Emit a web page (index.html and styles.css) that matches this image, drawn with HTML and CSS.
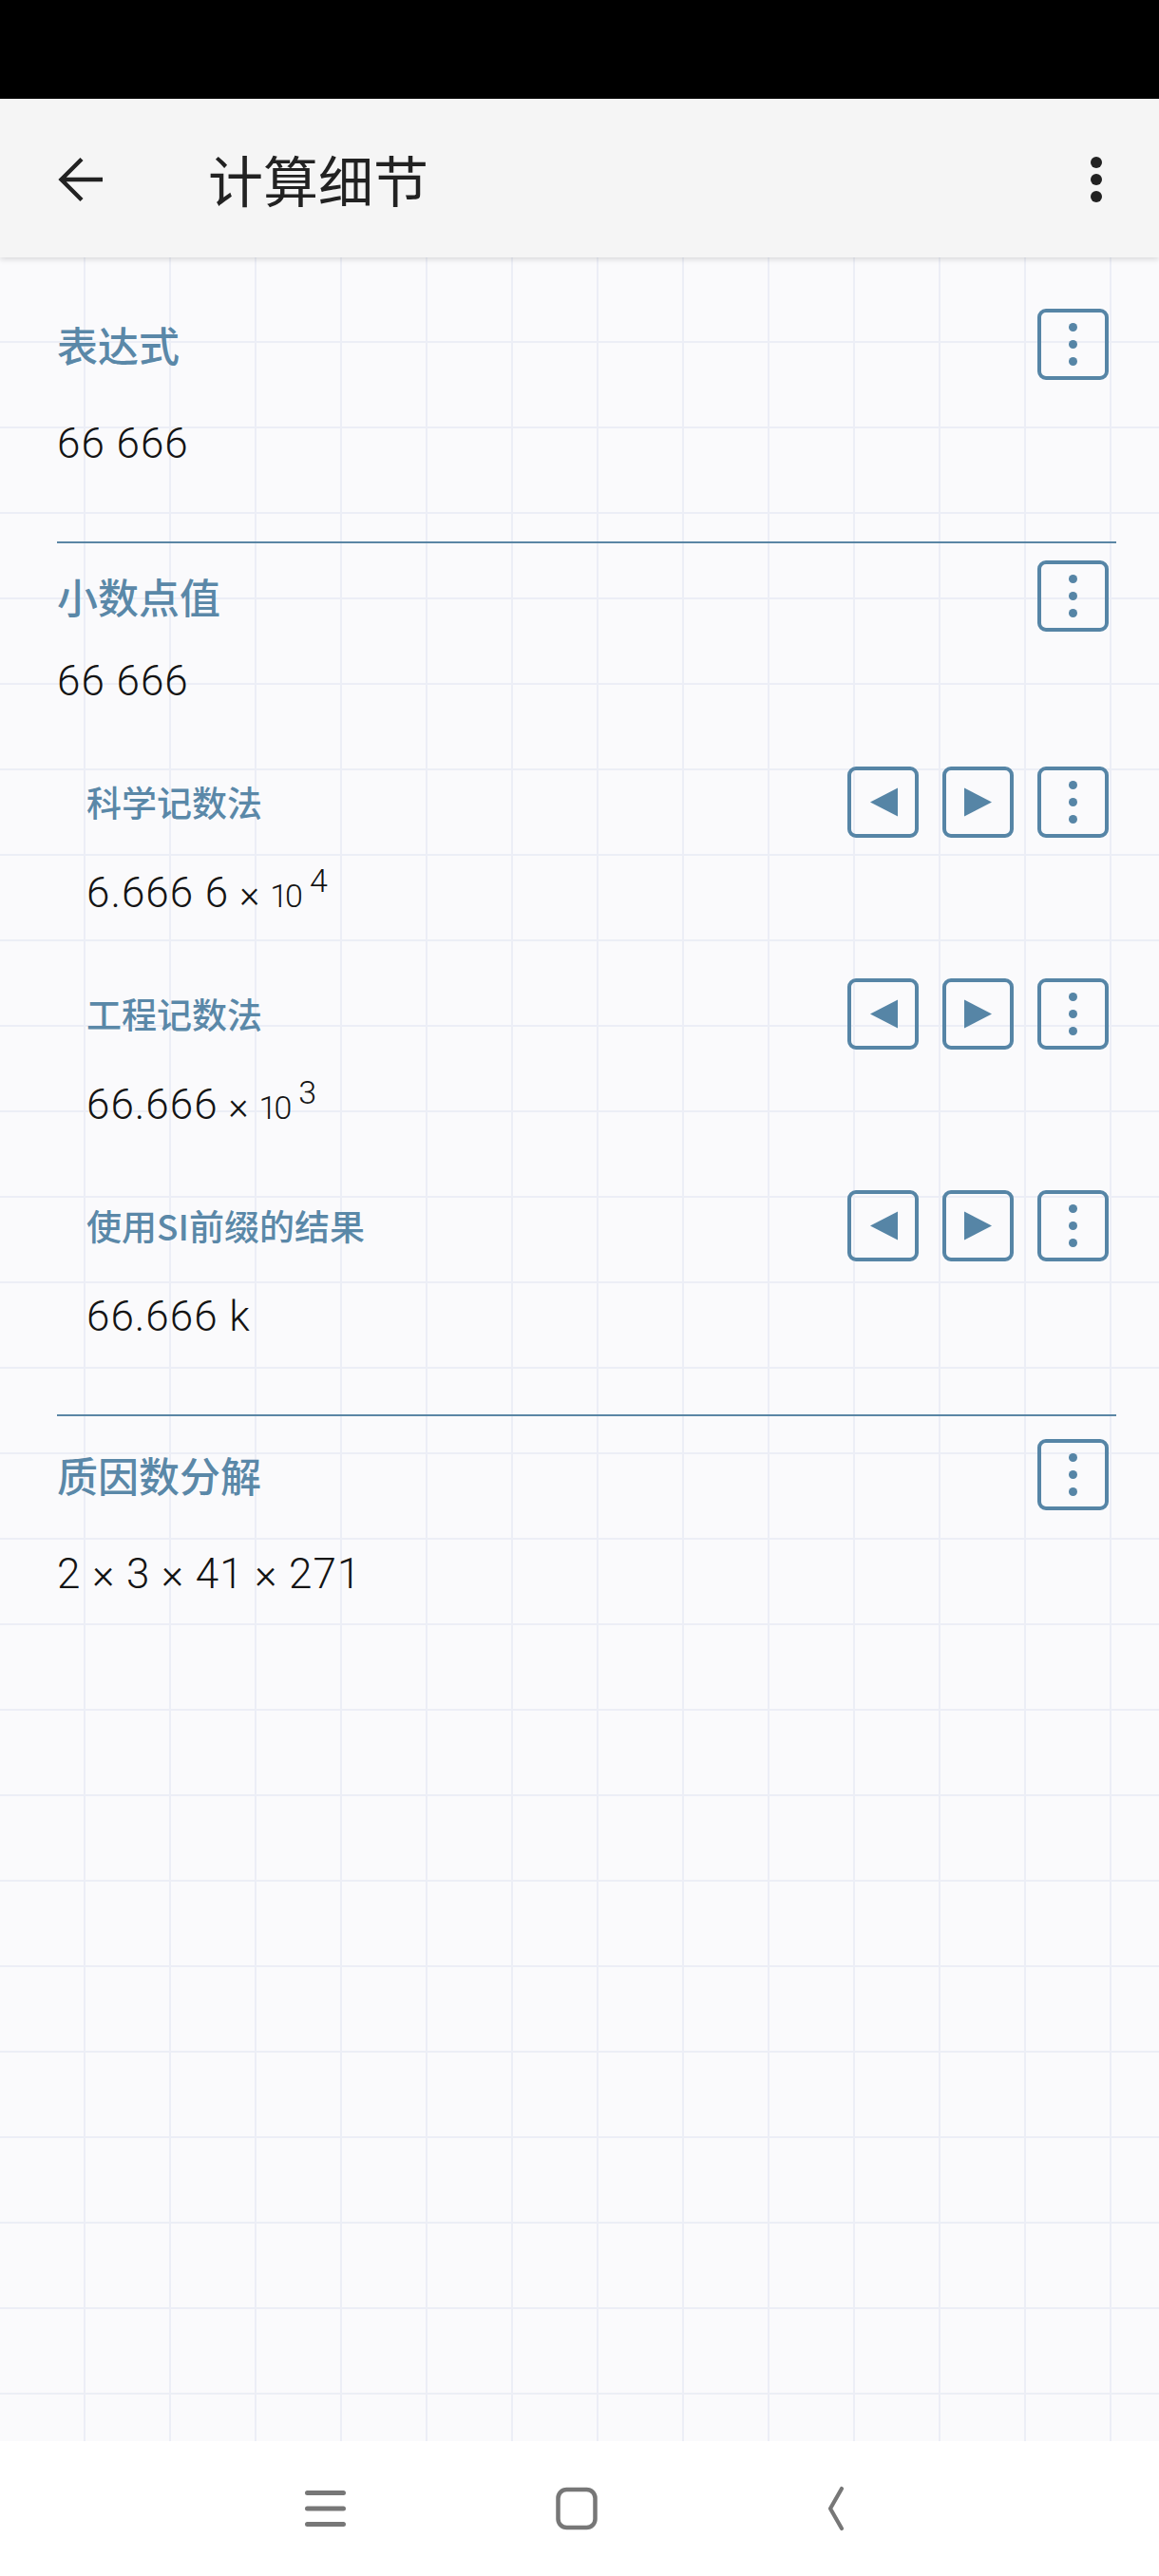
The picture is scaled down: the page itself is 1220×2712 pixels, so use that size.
FILE: index.html
```html
<!DOCTYPE html>
<html>

<head>
    <title>计算细节</title>
    <link rel="stylesheet" href="styles.css">
</head>

<body>
    <div class="status-bar"></div>

    <header class="app-bar">
        <svg class="back-icon" width="48" height="48" viewBox="0 0 48 48">
            <path d="M47 24H4 M25 2.5L3.5 24L25 45.5" fill="none" stroke="#222" stroke-width="4.4" />
        </svg>
        <h1 class="title">计算细节</h1>
        <svg class="overflow-icon" width="12" height="48" viewBox="0 0 12 48">
            <circle cx="6" cy="6" r="6" fill="#222" />
            <circle cx="6" cy="24" r="6" fill="#222" />
            <circle cx="6" cy="42" r="6" fill="#222" />
        </svg>
    </header>

    <main class="content">
        <section class="group group-expr">
            <div class="row-head">
                <h2 class="label">表达式</h2>
                <div class="actions">
                    <button class="btn" type="button">
                        <svg viewBox="0 0 67 67"><circle cx="33.5" cy="15.5" r="4.5" /><circle cx="33.5" cy="33.5" r="4.5" /><circle cx="33.5" cy="51.5" r="4.5" /></svg>
                    </button>
                </div>
            </div>
            <div class="value">66 666</div>
        </section>

        <hr class="divider">

        <section class="group group-decimal">
            <div class="row-head">
                <h2 class="label">小数点值</h2>
                <div class="actions">
                    <button class="btn" type="button">
                        <svg viewBox="0 0 67 67"><circle cx="33.5" cy="15.5" r="4.5" /><circle cx="33.5" cy="33.5" r="4.5" /><circle cx="33.5" cy="51.5" r="4.5" /></svg>
                    </button>
                </div>
            </div>
            <div class="value">66 666</div>

            <div class="sub">
                <div class="row-head">
                    <h3 class="label label-sub">科学记数法</h3>
                    <div class="actions">
                        <button class="btn" type="button">
                            <svg viewBox="0 0 67 67"><path d="M20 33.5L49 18.5V48.5Z" /></svg>
                        </button>
                        <button class="btn" type="button">
                            <svg viewBox="0 0 67 67"><path d="M19 18.5V48.5L48 33.5Z" /></svg>
                        </button>
                        <button class="btn" type="button">
                            <svg viewBox="0 0 67 67"><circle cx="33.5" cy="15.5" r="4.5" /><circle cx="33.5" cy="33.5" r="4.5" /><circle cx="33.5" cy="51.5" r="4.5" /></svg>
                        </button>
                    </div>
                </div>
                <div class="value">6.666 6<span class="times">×</span><span class="ten">10</span><span class="pow">4</span></div>
            </div>

            <div class="sub">
                <div class="row-head">
                    <h3 class="label label-sub">工程记数法</h3>
                    <div class="actions">
                        <button class="btn" type="button">
                            <svg viewBox="0 0 67 67"><path d="M20 33.5L49 18.5V48.5Z" /></svg>
                        </button>
                        <button class="btn" type="button">
                            <svg viewBox="0 0 67 67"><path d="M19 18.5V48.5L48 33.5Z" /></svg>
                        </button>
                        <button class="btn" type="button">
                            <svg viewBox="0 0 67 67"><circle cx="33.5" cy="15.5" r="4.5" /><circle cx="33.5" cy="33.5" r="4.5" /><circle cx="33.5" cy="51.5" r="4.5" /></svg>
                        </button>
                    </div>
                </div>
                <div class="value">66.666<span class="times">×</span><span class="ten">10</span><span class="pow">3</span></div>
            </div>

            <div class="sub">
                <div class="row-head">
                    <h3 class="label label-sub">使用SI前缀的结果</h3>
                    <div class="actions">
                        <button class="btn" type="button">
                            <svg viewBox="0 0 67 67"><path d="M20 33.5L49 18.5V48.5Z" /></svg>
                        </button>
                        <button class="btn" type="button">
                            <svg viewBox="0 0 67 67"><path d="M19 18.5V48.5L48 33.5Z" /></svg>
                        </button>
                        <button class="btn" type="button">
                            <svg viewBox="0 0 67 67"><circle cx="33.5" cy="15.5" r="4.5" /><circle cx="33.5" cy="33.5" r="4.5" /><circle cx="33.5" cy="51.5" r="4.5" /></svg>
                        </button>
                    </div>
                </div>
                <div class="value">66.666 k</div>
            </div>
        </section>

        <hr class="divider">

        <section class="group group-primes">
            <div class="row-head">
                <h2 class="label">质因数分解</h2>
                <div class="actions">
                    <button class="btn" type="button">
                        <svg viewBox="0 0 67 67"><circle cx="33.5" cy="15.5" r="4.5" /><circle cx="33.5" cy="33.5" r="4.5" /><circle cx="33.5" cy="51.5" r="4.5" /></svg>
                    </button>
                </div>
            </div>
            <div class="value">2 × 3 × 41 × 271</div>
        </section>
    </main>

    <footer class="nav-bar">
        <svg width="48" height="48" viewBox="0 0 48 48">
            <path d="M6.5 7.5H44.5 M6.5 24H44.5 M6.5 40.5H44.5" fill="none" stroke="#777" stroke-width="5" stroke-linecap="round" />
        </svg>
        <svg width="48" height="48" viewBox="0 0 48 48">
            <rect x="4.5" y="4" width="39" height="40" rx="9" fill="none" stroke="#777" stroke-width="4.5" />
        </svg>
        <svg width="48" height="48" viewBox="0 0 48 48">
            <path d="M37 3L25 24L37 45" fill="none" stroke="#777" stroke-width="4.2" stroke-linecap="round" stroke-linejoin="round" />
        </svg>
    </footer>
</body>

</html>
```

FILE: styles.css
```css
body {
    margin: 0;
    padding: 0;
    width: 1220px;
    height: 2712px;
    display: flex;
    flex-direction: column;
    font-family: "Noto Sans CJK SC", "Noto Sans", sans-serif;
    background-color: #ffffff;
    overflow: hidden;
}

.status-bar {
    height: 104px;
    background-color: #000;
    flex: none;
}

.app-bar {
    height: 167px;
    flex: none;
    display: flex;
    align-items: center;
    padding-left: 61px;
    background-color: #f5f5f5;
    box-shadow: 0 2px 6px rgba(0, 0, 0, 0.14);
    position: relative;
    z-index: 2;
}

.back-icon {
    flex: none;
    margin-top: 2px;
}

.title {
    margin: 0 0 0 110px;
    font-size: 58px;
    font-weight: 400;
    color: #222;
    line-height: 1;
}

.overflow-icon {
    margin-left: auto;
    margin-right: 60px;
    margin-top: 2px;
}

.content {
    flex: 1;
    padding: 0 45px 0 60px;
    background-color: #fafafc;
    background-image:
        linear-gradient(to right, #eceef6 2px, transparent 2px),
        linear-gradient(to bottom, #eceef6 2px, transparent 2px);
    background-size: 90px 90px;
    background-position: 88px 88px;
}

.row-head {
    display: flex;
    align-items: center;
    justify-content: space-between;
    height: 75px;
    padding-right: 8px;
}

.label {
    margin: 0;
    font-size: 43px;
    font-weight: 500;
    color: #5a88a8;
    line-height: 1.2;
}

.label-sub {
    font-size: 37px;
    padding-left: 31px;
}

.actions {
    display: flex;
    gap: 25px;
}

.btn {
    width: 75px;
    height: 75px;
    box-sizing: border-box;
    padding: 0;
    border: 4px solid #5685a6;
    border-radius: 9px;
    background: transparent;
    display: flex;
    cursor: pointer;
}

.btn svg {
    width: 67px;
    height: 67px;
    fill: #5685a6;
}

.value {
    font-family: Roboto, "Noto Sans", sans-serif;
    font-weight: 300;
    font-size: 44px;
    line-height: 60px;
    height: 60px;
    letter-spacing: 1px;
    color: #141414;
    white-space: pre;
}

.sub .value {
    padding-left: 31px;
}

/* exponent part: "× 10" and the raised power */
.times,
.ten,
.pow {
    font-size: 34px;
    line-height: 1;
    letter-spacing: 0;
}

.times {
    font-size: 40px;
    margin-left: 11px;
}

.ten {
    margin-left: 11px;
    letter-spacing: -3px;
}

.pow {
    margin-left: 10px;
    vertical-align: 16px;
}

.divider {
    height: 2px;
    margin: 0;
    border: none;
    background-color: #5a86a5;
}

.group-expr {
    padding-top: 54px;
}

.group-expr .value {
    margin-top: 37px;
    margin-bottom: 73px;
}

.group-decimal .row-head {
    margin-top: 18px;
}

.group-decimal > .value {
    margin-top: 22px;
}

.sub .row-head {
    margin-top: 60px;
}

.sub .value {
    margin-top: 28px;
}

.group-decimal .sub:last-child .value {
    margin-bottom: 73px;
}

.group-primes .row-head {
    margin-top: 24px;
}

.group-primes .value {
    margin-top: 37px;
}

.nav-bar {
    height: 142px;
    flex: none;
    display: flex;
    align-items: center;
    gap: 218px;
    padding-left: 317px;
    background-color: #ffffff;
}
```
